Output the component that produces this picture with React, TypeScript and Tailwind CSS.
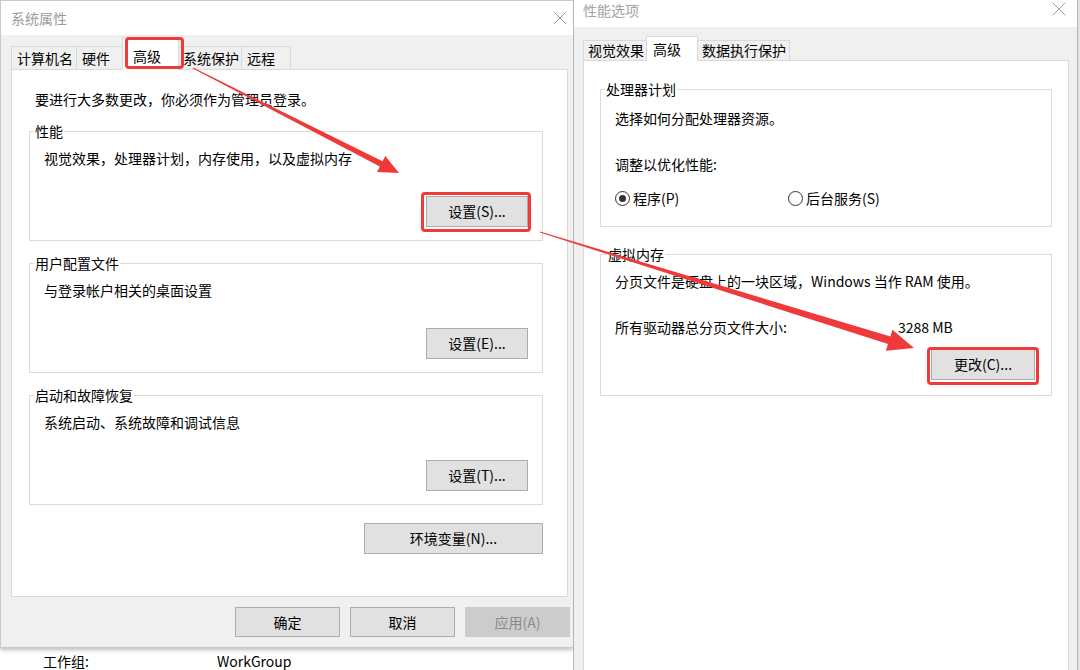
import { X } from "lucide-react";

const font = "font-['Noto_Sans_CJK_SC','Noto_Sans',sans-serif]";

function Btn({ label, className = "" }: { label: string; className?: string }) {
  return (
    <div
      className={`flex shrink-0 items-center justify-center bg-[#e1e1e1] border border-[#adadad] text-[14px] text-black ${className}`}
    >
      {label}
    </div>
  );
}

// tapered arrow, thin at the tail, head at the tip
function arrowPoints(x1: number, y1: number, x2: number, y2: number, w0: number, w1: number, head: number, hw: number) {
  const dx = x2 - x1;
  const dy = y2 - y1;
  const len = Math.hypot(dx, dy);
  const ux = dx / len;
  const uy = dy / len;
  const nx = -uy;
  const ny = ux;
  const bx = x2 - ux * head;
  const by = y2 - uy * head;
  const pts = [
    [x1 + nx * w0, y1 + ny * w0],
    [bx + nx * w1, by + ny * w1],
    [bx + nx * hw, by + ny * hw],
    [x2, y2],
    [bx - nx * hw, by - ny * hw],
    [bx - nx * w1, by - ny * w1],
    [x1 - nx * w0, y1 - ny * w0],
  ];
  return pts.map((p) => p.map((v) => v.toFixed(1)).join(",")).join(" ");
}

const leftTabs = [
  { label: "计算机名", w: "w-[66px]", pl: "pl-[5px]" },
  { label: "硬件", w: "w-[47px]", pl: "pl-[5px]" },
  { label: "高级", w: "w-[57px]", pl: "pl-[10px]", active: true },
  { label: "系统保护", w: "w-[64px]", pl: "pl-[4px]" },
  { label: "远程", w: "w-[50px]", pl: "pl-[5px]" },
];

const rightTabs = [
  { label: "视觉效果", w: "w-[64px]", pl: "pl-[4px]" },
  { label: "高级", w: "w-[52px]", pl: "pl-[6px]", active: true },
  { label: "数据执行保护", w: "w-[93px]", pl: "pl-[4px]" },
];

function Tab({ label, w, pl, active, big }: { label: string; w: string; pl: string; active?: boolean; big?: boolean }) {
  if (active) {
    return (
      <div
        className={`relative z-10 -mb-px -ml-px bg-white border border-b-0 border-[#d9d9d9] leading-[18px] ${w} ${pl} ${
          big ? "h-[33px] pt-[9px]" : "h-[25px] pt-[3px]"
        }`}
      >
        {label}
      </div>
    );
  }
  return (
    <div
      className={`-ml-px flex items-center bg-[#f0f0f0] border border-b-0 border-[#d9d9d9] ${w} ${pl} ${
        big ? "h-[23px]" : "h-[20px]"
      }`}
    >
      {label}
    </div>
  );
}

function Group({ title, text, btn, className = "" }: { title: string; text: string; btn: string; className?: string }) {
  return (
    <fieldset className={`border border-[#dcdcdc] px-[14px] pb-[13px] ${className}`}>
      <legend className="ml-[-10px] px-[1px] leading-[18px]">{title}</legend>
      <p className="mt-[9px] leading-[18px]">{text}</p>
      <div className="mt-[29px] flex justify-end">
        <Btn label={btn} className="w-[102px] h-[31px]" />
      </div>
    </fieldset>
  );
}

function Radio({ checked }: { checked?: boolean }) {
  return (
    <span className="flex h-[15px] w-[15px] items-center justify-center rounded-full border border-[#333] bg-white">
      {checked && <span className="h-[7px] w-[7px] rounded-full bg-[#333]" />}
    </span>
  );
}

export default function App() {
  return (
    <div className={`relative w-[1080px] h-[670px] overflow-hidden bg-white text-[14px] text-black ${font}`}>
      {/* window behind */}
      <div className="absolute left-[43px] top-[652px] flex leading-[18px]">
        <span className="w-[174px]">工作组:</span>
        <span>WorkGroup</span>
      </div>

      {/* 系统属性 */}
      <div className="absolute left-0 top-0 z-0 flex h-[648px] w-[573px] flex-col border-t border-l border-b border-[#c9c9c9] bg-[#f0f0f0] shadow-[0_2px_4px_rgba(0,0,0,0.25)]">
        <div className="flex h-[34px] shrink-0 items-center justify-between bg-white pl-[10px] pr-[1px]">
          <span className="text-[14px] text-[#9b9b9b]">系统属性</span>
          <X size={24} strokeWidth={1} className="text-[#9b9b9b]" />
        </div>
        <div className="flex shrink-0 flex-col pl-[10px]">
          <div className="flex h-[34px] items-end pl-px">
            {leftTabs.map((t) => (
              <Tab key={t.label} {...t} big />
            ))}
          </div>
          <div className="flex h-[528px] w-[557px] flex-col border border-[#d9d9d9] bg-white pt-[20px] pl-[17px] pr-[24px]">
            <p className="ml-[6px] leading-[18px]">要进行大多数更改，你必须作为管理员登录。</p>
            <Group className="mt-[14px]" title="性能" text="视觉效果，处理器计划，内存使用，以及虚拟内存" btn="设置(S)..." />
            <Group className="mt-[13px]" title="用户配置文件" text="与登录帐户相关的桌面设置" btn="设置(E)..." />
            <Group className="mt-[13px]" title="启动和故障恢复" text="系统启动、系统故障和调试信息" btn="设置(T)..." />
            <div className="mt-[18px] flex justify-end">
              <Btn label="环境变量(N)..." className="w-[179px] h-[31px]" />
            </div>
          </div>
        </div>
        <div className="mt-[10px] flex justify-end gap-[10px] pr-[3px]">
          <Btn label="确定" className="w-[105px] h-[30px]" />
          <Btn label="取消" className="w-[105px] h-[30px]" />
          <Btn label="应用(A)" className="w-[105px] h-[30px] !bg-[#cccccc] !border-[#cccccc] !text-[#8a8a8a]" />
        </div>
      </div>

      {/* 性能选项 */}
      <div className="absolute left-[573px] top-0 z-0 flex h-[700px] w-[505px] flex-col border-l border-r border-[#b5b5b5] bg-[#f0f0f0]">
        <div className="flex h-[27px] shrink-0 items-start justify-between bg-white pl-[9px] pr-[6px]">
          <span className="text-[14px] leading-[20px] text-[#a3a3a3]">性能选项</span>
          <X size={24} strokeWidth={1} className="-mt-[3px] text-[#a3a3a3]" />
        </div>
        <div className="flex min-h-0 flex-1 flex-col pl-[9px]">
          <div className="flex h-[33px] shrink-0 items-end pl-px">
            {rightTabs.map((t) => (
              <Tab key={t.label} {...t} />
            ))}
          </div>
          <div className="flex-1 w-[486px] border border-[#d9d9d9] bg-white px-[16px] pt-[19px]">
            <fieldset className="border border-[#dcdcdc] px-[14px] pb-[19px]">
              <legend className="ml-[-10px] px-[1px] leading-[18px]">处理器计划</legend>
              <p className="mt-[11px] leading-[18px]">选择如何分配处理器资源。</p>
              <p className="mt-[28px] leading-[18px]">调整以优化性能:</p>
              <div className="mt-[16px] flex h-[18px] items-center">
                <div className="flex w-[173px] items-center gap-[3px]">
                  <Radio checked />
                  <span>程序(P)</span>
                </div>
                <div className="flex items-center gap-[3px]">
                  <Radio />
                  <span>后台服务(S)</span>
                </div>
              </div>
            </fieldset>
            <fieldset className="mt-[18px] border border-[#dcdcdc] px-[14px] pb-[15px]">
              <legend className="ml-[-8px] px-[1px] leading-[18px]">虚拟内存</legend>
              <p className="mt-[9px] leading-[18px]">分页文件是硬盘上的一块区域，Windows 当作 RAM 使用。</p>
              <div className="mt-[28px] flex leading-[18px]">
                <span className="w-[283px]">所有驱动器总分页文件大小:</span>
                <span>3288 MB</span>
              </div>
              <div className="mt-[13px] flex justify-end pr-[2px]">
                <Btn label="更改(C)..." className="w-[104px] h-[31px]" />
              </div>
            </fieldset>
          </div>
        </div>
      </div>

      {/* desktop edge */}
      <div className="absolute left-[1078px] top-0 h-full w-[2px] bg-[#e4e4e4]" />

      {/* highlights */}
      <div className="absolute left-[125px] top-[37px] z-20 h-[32px] w-[59px] rounded-[4px] border-[3px] border-[#f03a3a]" />
      <div className="absolute left-[421px] top-[192px] z-20 h-[40px] w-[110px] rounded-[4px] border-[3px] border-[#f03a3a]" />
      <div className="absolute left-[927px] top-[347px] z-20 h-[38px] w-[112px] rounded-[4px] border-[3px] border-[#f03a3a]" />

      <svg className="pointer-events-none absolute left-0 top-0 z-20" width={1080} height={670}>
        <polygon points={arrowPoints(193, 68, 399, 173, 0.5, 3, 20, 9)} fill="#f03a3a" />
        <polygon points={arrowPoints(540, 232, 914, 348, 0.5, 4, 26, 11)} fill="#f03a3a" />
      </svg>
    </div>
  );
}
